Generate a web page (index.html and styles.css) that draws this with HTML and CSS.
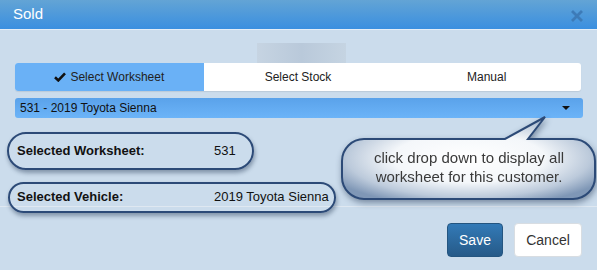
FILE: index.html
```html
<!DOCTYPE html>
<html lang="en">
<head>
  <meta charset="UTF-8" />
  <title>Sold</title>
  <link rel="stylesheet" href="styles.css">
</head>
<body>

<div class="modal">
  <div class="modal-header">
    <span class="modal-title">Sold</span>
    <svg class="close" width="12" height="12" viewBox="0 0 12 12">
      <path d="M2 2 L10 10 M10 2 L2 10" stroke="#3d7bb8" stroke-width="2.8" stroke-linecap="square"/>
    </svg>
  </div>

  <div class="modal-body">
    <div class="loader"></div>

    <div class="tabs">
      <div class="tab active">
        <svg width="12" height="10" viewBox="0 0 12 10"><path d="M1 5.2 L4.3 8.4 L11 1.4" fill="none" stroke="#111" stroke-width="2.6"/></svg>
        Select Worksheet
      </div>
      <div class="tab">Select Stock</div>
      <div class="tab">Manual</div>
    </div>

    <div class="select">
      <span>531 - 2019 Toyota Sienna</span>
      <span class="caret"></span>
    </div>

    <div class="info">
      <div class="row row-ws">
        <span class="label">Selected Worksheet:</span>
        <span class="value">531</span>
      </div>
      <div class="row row-veh">
        <span class="label">Selected Vehicle:</span>
        <span class="value">2019 Toyota Sienna</span>
      </div>
    </div>

    <!-- callout pointing at the dropdown -->
    <div class="callout">
      <svg width="262" height="100" viewBox="0 0 262 100">
        <defs>
          <radialGradient id="glow" cx="50%" cy="50%" r="60%">
            <stop offset="0%" stop-color="#ffffff"/>
            <stop offset="50%" stop-color="#f4f7fa"/>
            <stop offset="80%" stop-color="#bccadb"/>
            <stop offset="100%" stop-color="#7f97b6"/>
          </radialGradient>
        </defs>
        <path d="M29 29 H170 L210 7 L193 29 H238 A22 22 0 0 1 260 51 V67 A22 22 0 0 1 238 89 H29 A22 22 0 0 1 7 67 V51 A22 22 0 0 1 29 29 Z"
              fill="url(#glow)" stroke="#2c4a77" stroke-width="2"/>
      </svg>
      <div class="callout-text">click drop down to display all<br>worksheet for this customer.</div>
    </div>
  </div>

  <div class="modal-footer">
    <button class="btn btn-save">Save</button>
    <button class="btn btn-cancel">Cancel</button>
  </div>
</div>

</body>
</html>
```

FILE: styles.css
```css
body {
  margin: 0;
  font-family: 'Liberation Sans', Arial, sans-serif;
  background: #cbdcec;
  color: #333;
}

.modal {
  width: 597px;
  height: 270px;
  background: #cbdcec;
  position: relative;
  overflow: hidden;
}

.modal-header {
  height: 29px;
  display: flex;
  align-items: center;
  justify-content: space-between;
  padding: 0 14px 0 13px;
  background: linear-gradient(to bottom, #63a4d5, #3a8fe0);
  border-bottom: 1px solid #e3edf7;
}

.modal-title {
  color: #fff;
  font-size: 15px;
  margin-top: -3px;
}

.close {
  margin-top: 2px;
}

.modal-body {
  padding: 13px 14px 0 15px;
  position: relative;
}

.loader {
  width: 89px;
  height: 20px;
  margin-left: 242px;
  background: linear-gradient(to right, #c6d4e2, #b9c9da 50%, #c5d4e2);
}

.tabs {
  display: flex;
  height: 28px;
  width: 566px;
  background: #fff;
  border-radius: 3px;
  overflow: hidden;
  box-shadow: 0 1px 1px rgba(0, 0, 0, 0.08);
}

.tab {
  flex: 1;
  display: flex;
  align-items: center;
  justify-content: center;
  gap: 4px;
  font-size: 12px;
  color: #222;
}

.tab.active {
  background: #6ab1f6;
}

.select {
  margin-top: 7px;
  width: 568px;
  height: 20px;
  box-sizing: border-box;
  padding: 0 13px 0 5px;
  display: flex;
  align-items: center;
  justify-content: space-between;
  font-size: 12px;
  color: #111;
  background: linear-gradient(to bottom, #5aa2ea, #6cb4f8);
  border-radius: 3px;
}

.caret {
  width: 0;
  height: 0;
  border-left: 4px solid transparent;
  border-right: 4px solid transparent;
  border-top: 4px solid #111;
}

.info {
  margin-top: 22px;
}

.row {
  position: relative;
  display: flex;
  height: 20px;
  align-items: center;
  font-size: 13px;
  color: #111;
}

.row-veh {
  margin-top: 26px;
}

.row::before {
  content: "";
  position: absolute;
  border: 2px solid #2c4a77;
  border-radius: 20px;
  box-shadow: 1px 3px 4px rgba(20, 40, 70, 0.4);
}

.row-ws::before {
  left: -8px;
  top: -8px;
  width: 243px;
  height: 34px;
}

.row-veh::before {
  left: -7px;
  top: -4px;
  width: 324px;
  height: 27px;
}

.label {
  width: 197px;
  padding-left: 2px;
  font-weight: bold;
}

.callout {
  position: absolute;
  left: 335px;
  top: 80px;
  width: 262px;
  height: 100px;
  filter: drop-shadow(1px 3px 3px rgba(20, 40, 70, 0.45));
}

.callout svg {
  display: block;
}

.callout-text {
  position: absolute;
  left: 7px;
  top: 38px;
  width: 254px;
  text-align: center;
  font-size: 15px;
  line-height: 19px;
  color: #3a3a3a;
}

.modal-footer {
  border-top: 1px solid #dfe8f1;
  padding: 16px 15px 0 0;
  display: flex;
  justify-content: flex-end;
  gap: 11px;
}

.btn {
  height: 34px;
  font-family: inherit;
  font-size: 14px;
  border-radius: 4px;
  cursor: pointer;
}

.btn-save {
  width: 56px;
  color: #fff;
  border: 1px solid #245580;
  background: linear-gradient(to bottom, #337ab7, #265a88);
}

.btn-cancel {
  width: 68px;
  color: #333;
  background: #fff;
  border: 1px solid #d8dde2;
}
```
